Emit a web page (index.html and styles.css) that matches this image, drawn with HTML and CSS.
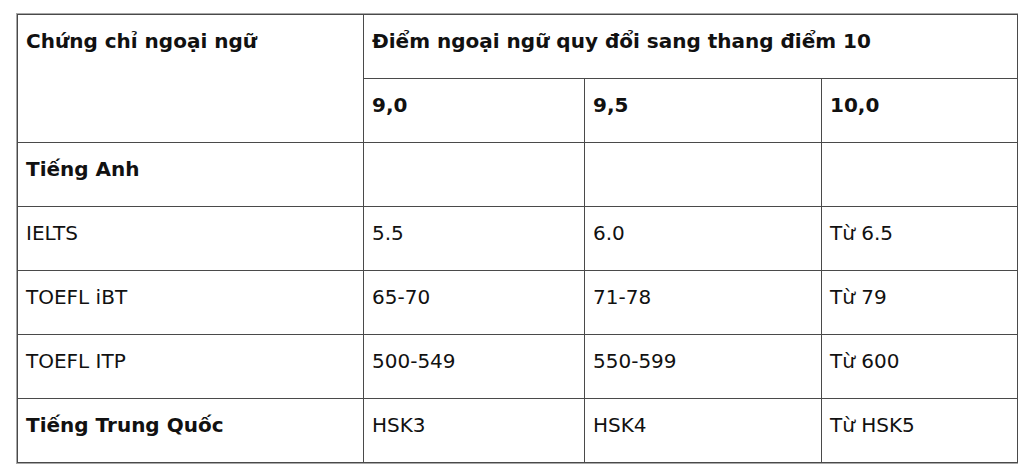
FILE: index.html
```html
<!DOCTYPE html>
<html lang="vi">
<head>
<meta charset="utf-8">
<link rel="stylesheet" href="styles.css">
</head>
<body>
<div class="frame">
<table class="conv">
<colgroup>
<col class="c1"><col class="c2"><col class="c3"><col class="c4">
</colgroup>
<tr>
<td rowspan="2" class="b">Chứng chỉ ngoại ngữ</td>
<td colspan="3" class="b">Điểm ngoại ngữ quy đổi sang thang điểm 10</td>
</tr>
<tr>
<td class="b">9,0</td><td class="b">9,5</td><td class="b">10,0</td>
</tr>
<tr>
<td class="b">Tiếng Anh</td><td></td><td></td><td></td>
</tr>
<tr>
<td>IELTS</td><td>5.5</td><td>6.0</td><td>Từ 6.5</td>
</tr>
<tr>
<td>TOEFL iBT</td><td>65-70</td><td>71-78</td><td>Từ 79</td>
</tr>
<tr>
<td>TOEFL ITP</td><td>500-549</td><td>550-599</td><td>Từ 600</td>
</tr>
<tr>
<td class="b">Tiếng Trung Quốc</td><td>HSK3</td><td>HSK4</td><td>Từ HSK5</td>
</tr>
</table>
</div>
</body>
</html>
```
FILE: styles.css
```css
html, body {
  margin: 0;
  padding: 0;
  background: #fff;
}
body {
  padding: 13px 0 0 16px;
  font-family: "DejaVu Sans", Verdana, sans-serif;
  color: #111;
}
.frame {
  width: 1000px;
  border: 1px solid #a8a8a8;
}
.conv {
  width: 1000px;
  border-collapse: collapse;
  table-layout: fixed;
}
.c1 { width: 346px; }
.c2 { width: 221px; }
.c3 { width: 237px; }
.c4 { width: 196px; }
.conv td {
  border: 1px solid #4a4a4a;
  padding: 14px 8px 25px 8px;
  font-size: 20px;
  line-height: 24px;
  vertical-align: top;
  height: 24px;
}
.conv td.b {
  font-weight: bold;
}
```
